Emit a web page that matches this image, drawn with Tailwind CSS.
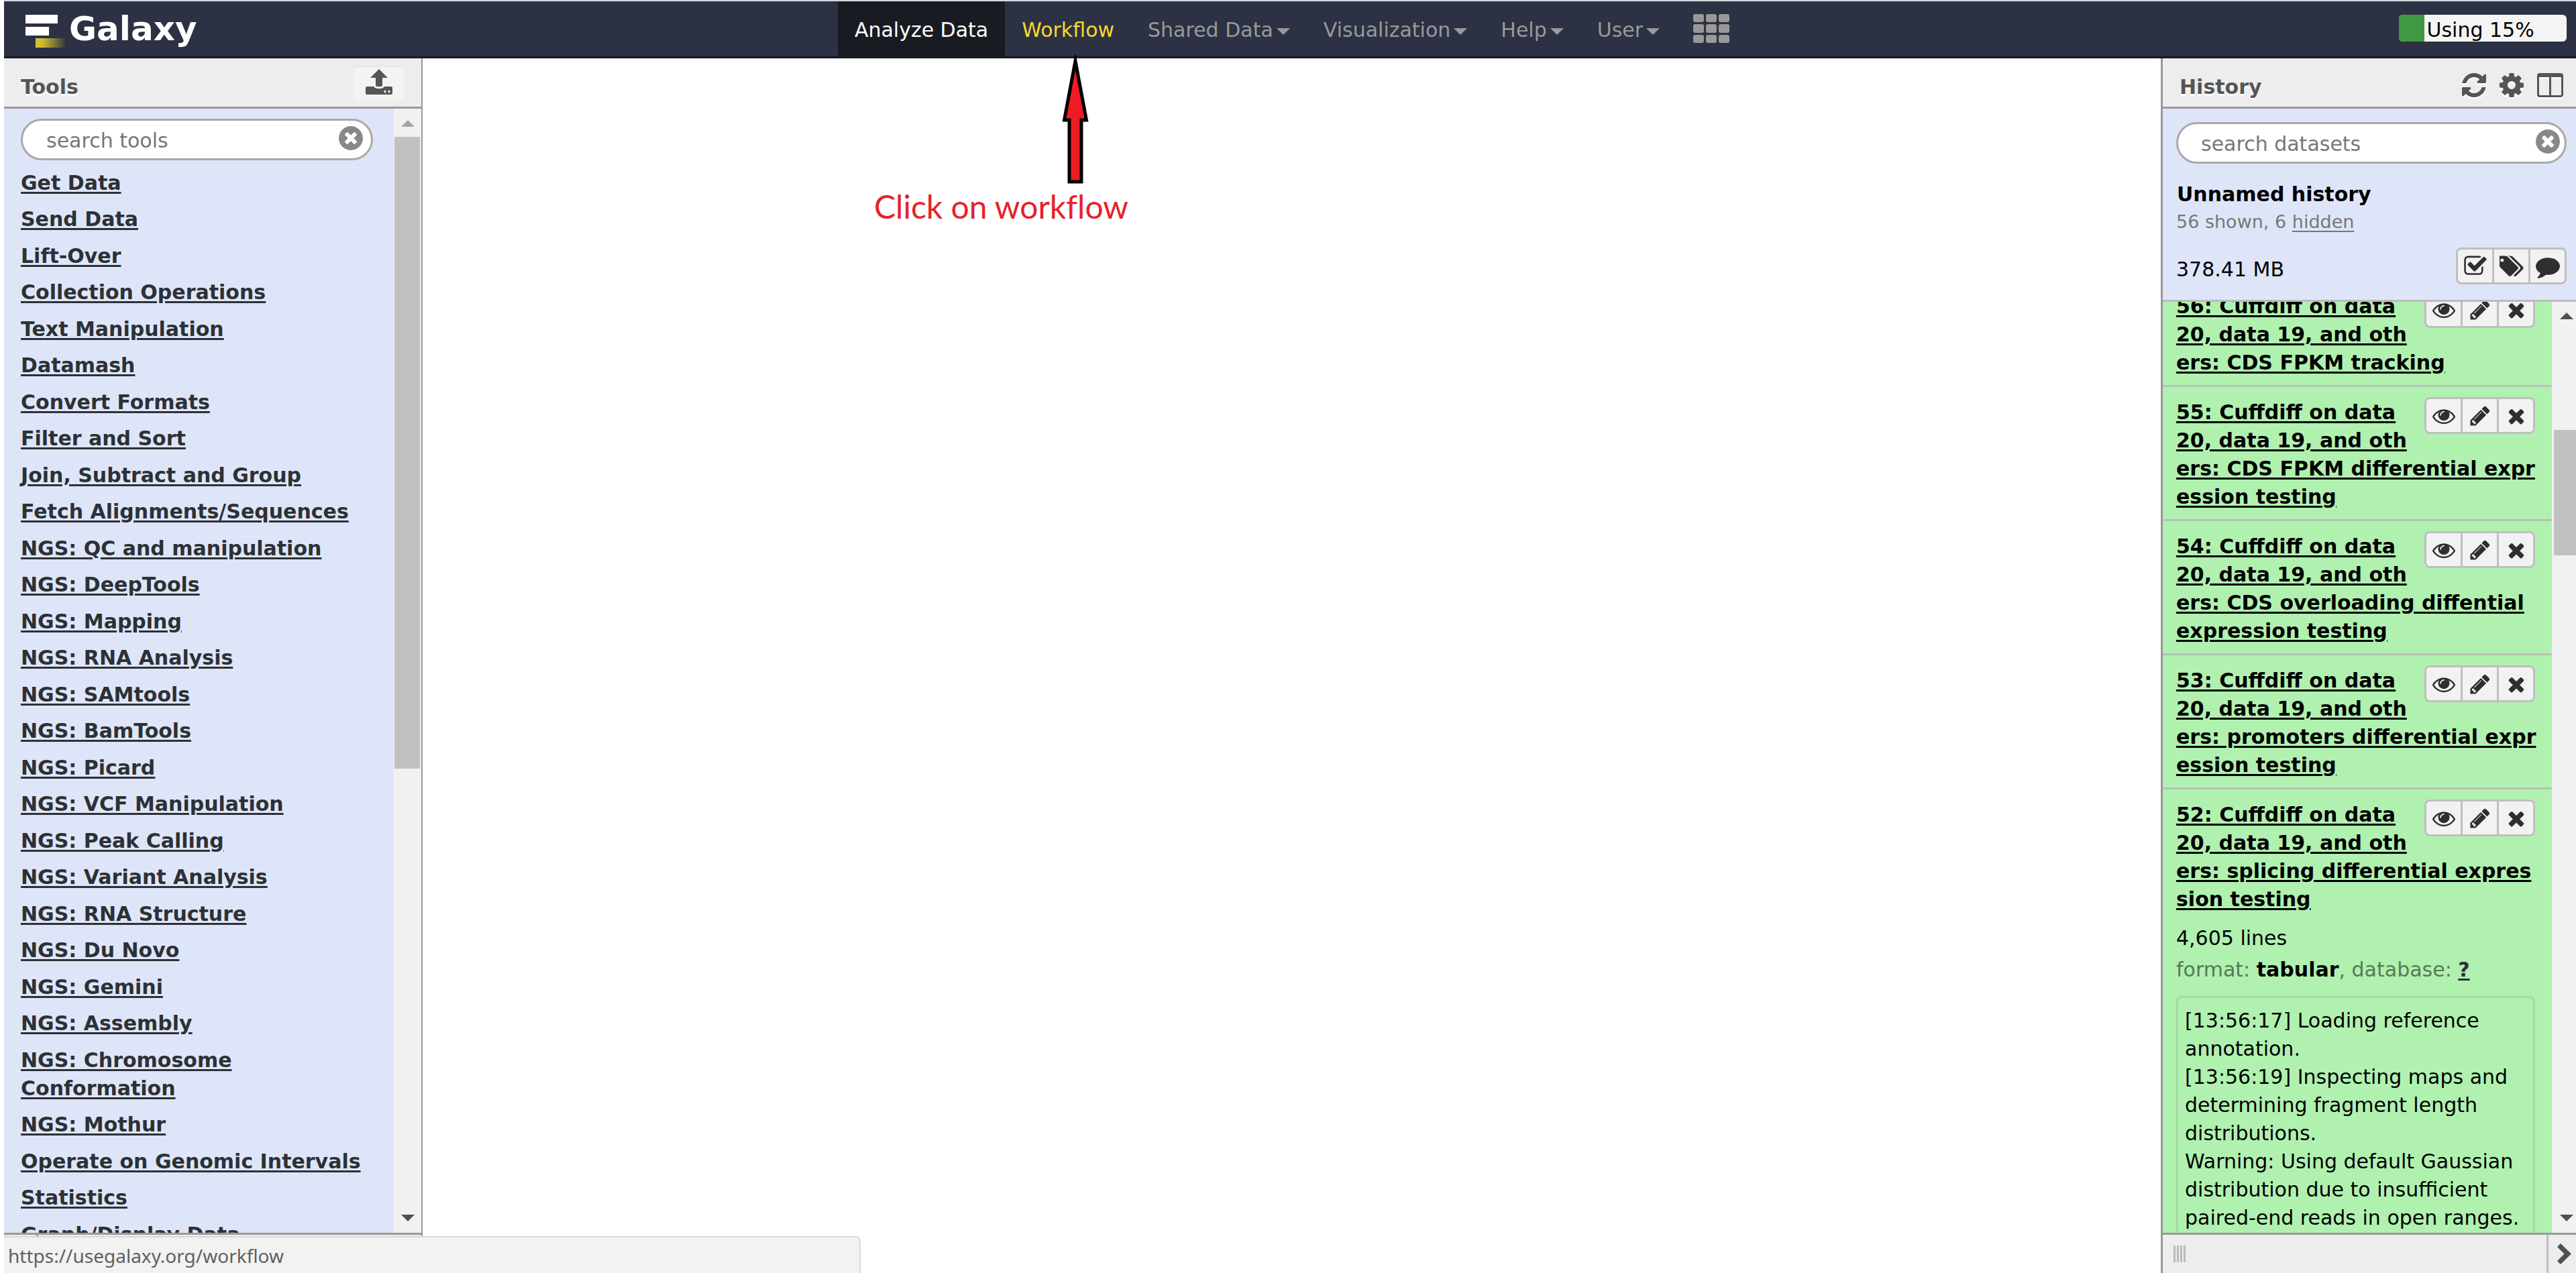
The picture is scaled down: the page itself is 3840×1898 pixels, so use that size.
<!DOCTYPE html>
<html lang="en">
<head>
<meta charset="utf-8">
<title>Galaxy</title>
<script src="https://cdn.jsdelivr.net/npm/@tailwindcss/browser@4"></script>
</head>
<body class="h-screen overflow-hidden bg-white pl-1.5 flex flex-col font-['DejaVu_Sans',Verdana,sans-serif] text-[30px] leading-[42px] text-black">

<svg class="hidden" aria-hidden="true">
  <symbol id="i-clear" viewBox="128 128 1536 1536"><path d="M1277 1122q0-26-19-45l-181-181 181-181q19-19 19-45 0-27-19-46l-90-90q-19-19-46-19-26 0-45 19l-181 181-181-181q-19-19-45-19-27 0-46 19l-90 90q-19 19-19 46 0 26 19 45l181 181-181 181q-19 19-19 45 0 27 19 46l90 90q19 19 46 19 26 0 45-19l181-181 181 181q19 19 45 19 27 0 46-19l90-90q19-19 19-46zm387-226q0 209-103 385.500t-279.500 279.500-385.500 103-385.500-103-279.500-279.500-103-385.500 103-385.500 279.500-279.500 385.500-103 385.500 103 279.500 279.500 103 385.500z"/></symbol>
  <symbol id="i-times" viewBox="0 0 1792 1792"><path d="M1490 1322q0 40-28 68l-136 136q-28 28-68 28t-68-28l-294-294-294 294q-28 28-68 28t-68-28l-136-136q-28-28-28-68t28-68l294-294-294-294q-28-28-28-68t28-68l136-136q28-28 68-28t68 28l294 294 294-294q28-28 68-28t68 28l136 136q28 28 28 68t-28 68l-294 294 294 294q28 28 28 68z"/></symbol>
  <symbol id="i-eye" viewBox="0 0 1792 1792"><path d="M1664 960q-152-236-381-353 61 104 61 225 0 185-131.500 316.500t-316.500 131.500-316.500-131.500-131.500-316.500q0-121 61-225-229 117-381 353 133 205 333.500 326.500t434.500 121.500 434.500-121.500 333.500-326.500zm-720-384q0-20-14-34t-34-14q-125 0-214.500 89.500t-89.500 214.500q0 20 14 34t34 14 34-14 14-34q0-86 61-147t147-61q20 0 34-14t14-34zm848 384q0 34-20 69-140 230-376.500 368.500t-499.500 138.500-499.500-139-376.500-368q-20-35-20-69t20-69q140-229 376.500-368t499.500-139 499.500 139 376.500 368q20 35 20 69z"/></symbol>
  <symbol id="i-pencil" viewBox="0 0 1792 1792"><path d="M491 1536l91-91-235-235-91 91v107h128v128h107zm523-928q0-22-22-22-10 0-17 7l-542 542q-7 7-7 17 0 22 22 22 10 0 17-7l542-542q7-7 7-17zm-54-192l416 416-832 832h-416v-416zm683 96q0 53-37 90l-166 166-416-416 166-165q36-38 90-38 53 0 91 38l235 234q37 39 37 91z"/></symbol>
  <symbol id="i-refresh" viewBox="128 128 1536 1536"><path d="M1639 1056q0 5-1 7-64 268-268 434.500t-478 166.500q-146 0-282.500-55t-243.500-157l-129 129q-19 19-45 19t-45-19-19-45v-448q0-26 19-45t45-19h448q26 0 45 19t19 45-19 45l-137 137q71 66 161 102t187 36q134 0 250-65t186-179q11-17 53-117 8-23 30-23h192q13 0 22.500 9.500t9.500 22.500zm25-800v448q0 26-19 45t-45 19h-448q-26 0-45-19t-19-45 19-45l138-138q-148-137-349-137-134 0-250 65t-186 179q-11 17-53 117-8 23-30 23h-199q-13 0-22.500-9.500t-9.500-22.500v-7q65-268 270-434.500t480-166.500q146 0 284 55.500t245 156.500l130-129q19-19 45-19t45 19 19 45z"/></symbol>
  <symbol id="i-cog" viewBox="128 128 1536 1536"><path d="M1152 896q0-106-75-181t-181-75-181 75-75 181 75 181 181 75 181-75 75-181zm512-109v222q0 12-8 23t-20 13l-185 28q-19 54-39 91 35 50 107 138 10 12 10 25t-9 23q-27 37-99 108t-94 71q-12 0-26-9l-138-108q-44 23-91 38-16 136-29 186-7 28-36 28h-222q-14 0-24.500-8.500t-11.500-21.500l-28-184q-49-16-90-37l-141 107q-10 9-25 9-14 0-25-11-126-114-165-168-7-10-7-23 0-12 8-23 15-21 51-66.500t54-70.500q-27-50-41-99l-183-27q-13-2-21-12.500t-8-23.500v-222q0-12 8-23t19-13l186-28q14-46 39-92-40-57-107-138-10-12-10-24 0-10 9-23 26-36 98.500-107.500t94.500-71.500q13 0 26 10l138 107q44-23 91-38 16-136 29-186 7-28 36-28h222q14 0 24.500 8.500t11.500 21.500l28 184q49 16 90 37l142-107q9-9 24-9 13 0 25 10 129 119 165 170 7 8 7 22 0 12-8 23-15 21-51 66.500t-54 70.500q26 50 41 98l183 28q13 2 21 12.500t8 23.500z"/></symbol>
  <symbol id="i-columns" viewBox="0 0 39 36"><path fill-rule="evenodd" d="M4 0H35Q39 0 39 4V32Q39 36 35 36H4Q0 36 0 32V4Q0 0 4 0ZM3 6V32Q3 33 4 33H18V6ZM21 6V33H35Q36 33 36 32V6Z"/></symbol>
  <symbol id="i-check" viewBox="0 0 1792 1792"><path d="M1472 930v318q0 119-84.500 203.500t-203.500 84.500h-832q-119 0-203.500-84.500t-84.500-203.500v-832q0-119 84.500-203.500t203.500-84.500h832q63 0 117 25 15 7 18 23 3 17-9 29l-49 49q-10 10-23 10-3 0-9-2-23-6-45-6h-832q-66 0-113 47t-47 113v832q0 66 47 113t113 47h832q66 0 113-47t47-113v-254q0-13 9-22l64-64q10-10 23-10 6 0 12 3 20 8 20 29zm231-489l-814 814q-24 24-57 24t-57-24l-430-430q-24-24-24-57t24-57l110-110q24-24 57-24t57 24l263 263 647-647q24-24 57-24t57 24l110 110q24 24 24 57t-24 57z"/></symbol>
  <symbol id="i-tags" viewBox="64 0 1792 1792"><path d="M384 448q0-53-37.500-90.500t-90.500-37.500-90.500 37.500-37.500 90.500 37.500 90.500 90.500 37.500 90.500-37.500 37.500-90.500zm1067 576q0 53-37 90l-491 492q-39 37-91 37-53 0-90-37l-715-716q-38-37-64.500-101t-26.500-117v-416q0-52 38-90t90-38h416q53 0 117 26.500t102 64.500l715 714q37 39 37 91zm384 0q0 53-37 90l-491 492q-39 37-91 37-36 0-59-14t-53-45l470-470q37-37 37-90 0-52-37-91l-715-714q-38-38-102-64.500t-117-26.500h224q53 0 117 26.500t102 64.500l715 714q37 39 37 91z"/></symbol>
  <symbol id="i-comment" viewBox="0 0 1792 1792"><path d="M1792 896q0 174-120 321.500t-326 233-450 85.500q-70 0-145-8-198 175-460 242-49 14-114 22-17 2-30.500-9t-17.500-29v-1q-3-4-.5-12t2-10 4.500-9.500l6-9 7-8.500 8-9q7-8 31-34.500t34.500-38 31-39.500 32.500-51 27-59 26-76q-157-89-247.500-220t-90.500-281q0-130 71-248.500t191-204.500 286-136.500 348-50.500q244 0 450 85.500t326 233 120 321.500z"/></symbol>
  <symbol id="i-caret" viewBox="0 0 20 10"><path d="M0 0H20L10 10Z"/></symbol>
  <symbol id="i-caret-up" viewBox="0 0 20 10"><path d="M0 10H20L10 0Z"/></symbol>
</svg>

<header class="flex shrink-0 border-t-2 border-b-[3px] border-t-[#d3dadd] border-b-[#191b23] bg-[#2c3143]">
  <a href="#" class="flex flex-1 gap-[3px] pl-5 pt-3 text-[50px] leading-[58px] font-bold text-white">
    <svg class="ml-3 mt-2 h-[50px] w-[62px]" viewBox="0 0 62 50">
      <defs><linearGradient id="fade"><stop offset="0" stop-color="#d9c42c"/><stop offset=".25" stop-color="#cbb830"/><stop offset="1" stop-color="#2c3143"/></linearGradient></defs>
      <path fill="#fff" d="M0 0h48v13H0zM0 18h35v13H0z"/><path fill="url(#fade)" d="M15 35h46v14H15z"/>
    </svg>
    Galaxy
  </a>
  <nav class="flex text-[#999]">
    <a href="#" class="bg-[#191b23] px-[25px] pt-[22px] pb-[18px] text-white">Analyze Data</a>
    <a href="#" class="px-[25px] pt-[22px] pb-[18px] text-[#f5d72e]">Workflow</a>
    <a href="#" class="flex gap-[5px] px-[25px] pt-[22px] pb-[18px]">Shared Data<svg class="mt-[18px] h-2.5 w-5 fill-current"><use href="#i-caret"/></svg></a>
    <a href="#" class="flex gap-[5px] px-[25px] pt-[22px] pb-[18px]">Visualization<svg class="mt-[18px] h-2.5 w-5 fill-current"><use href="#i-caret"/></svg></a>
    <a href="#" class="flex gap-[5px] px-[25px] pt-[22px] pb-[18px]">Help<svg class="mt-[18px] h-2.5 w-5 fill-current"><use href="#i-caret"/></svg></a>
    <a href="#" class="flex gap-[5px] px-[25px] pt-[22px] pb-[18px]">User<svg class="mt-[18px] h-2.5 w-5 fill-current"><use href="#i-caret"/></svg></a>
    <a href="#" aria-label="Apps" class="px-[25px] pt-[19px]">
      <svg class="h-[43px] w-[54px] fill-current" viewBox="0 0 54 43"><rect width="16" height="12" rx="3"/><rect x="19" width="16" height="12" rx="3"/><rect x="38" width="16" height="12" rx="3"/><rect y="15" width="16" height="13" rx="3"/><rect x="19" y="15" width="16" height="13" rx="3"/><rect x="38" y="15" width="16" height="13" rx="3"/><rect y="31" width="16" height="12" rx="3"/><rect x="19" y="31" width="16" height="12" rx="3"/><rect x="38" y="31" width="16" height="12" rx="3"/></svg>
    </a>
  </nav>
  <div class="flex flex-1 justify-end pt-5 pr-3.5">
    <div class="flex h-10 w-[250px] overflow-hidden rounded-md bg-[#f4f4f4] text-black">
      <div class="bg-[#409843]" style="width:15%"></div>
      <span class="pl-1 pt-0.5">Using 15%</span>
    </div>
  </div>
</header>

<div class="flex min-h-0 flex-1">

  <aside class="flex w-[624px] shrink-0 flex-col border-r-2 border-[#999] bg-[#dfe5f9]">
    <div class="flex h-[75px] shrink-0 justify-between border-b-[3px] border-[#999] bg-[#ededed] pl-[25px] pr-6 text-[#555]">
      <h2 class="pt-[22px] font-bold [text-shadow:0_3px_0_#fff]">Tools</h2>
      <button aria-label="Upload data" class="mt-2.5 flex h-[53px] w-[78px] items-start justify-center rounded-md bg-[#f3f3f3] pt-1.5 shadow-[inset_0_2px_3px_#e2e2e2]">
        <svg class="h-[38px] w-10 fill-current" viewBox="0 0 40 38"><path d="M20 0L33 13H25V24Q25 26 23 26H17Q15 26 15 24V13H7ZM2 26H12Q14 29 17 29H23Q26 29 28 26H38Q40 26 40 28V36Q40 38 38 38H2Q0 38 0 36V28Q0 26 2 26ZM29 31.500a1.500 2 0 1 0 0 4a1.500 2 0 1 0 0-4ZM35 31.500a1.500 2 0 1 0 0 4a1.500 2 0 1 0 0-4Z" fill-rule="evenodd"/></svg>
      </button>
    </div>
    <div class="flex min-h-0 flex-1">
      <div class="min-h-0 flex-1 overflow-hidden pl-[25px] pt-[15px]">
        <form class="flex h-[62px] w-[525px] items-center rounded-full border-[3px] border-[#a9a9a9] bg-white pl-[35px] pr-3">
          <input aria-label="search tools" placeholder="search tools" class="min-w-0 flex-1 bg-transparent pt-[3px] outline-none placeholder:text-[#777]">
          <button type="button" aria-label="Clear search" class="pb-1"><svg class="size-9 fill-[#888]"><use href="#i-clear"/></svg></button>
        </form>
        <ul class="pt-[13px] font-bold text-[#2c3135] underline decoration-[3px] underline-offset-[3px] [&>li:nth-child(odd)]:mb-3 [&>li:nth-child(even)]:mb-[13px]">
          <li><a href="#">Get Data</a></li>
          <li><a href="#">Send Data</a></li>
          <li><a href="#">Lift-Over</a></li>
          <li><a href="#">Collection Operations</a></li>
          <li><a href="#">Text Manipulation</a></li>
          <li><a href="#">Datamash</a></li>
          <li><a href="#">Convert Formats</a></li>
          <li><a href="#">Filter and Sort</a></li>
          <li><a href="#">Join, Subtract and Group</a></li>
          <li><a href="#">Fetch Alignments/Sequences</a></li>
          <li><a href="#">NGS: QC and manipulation</a></li>
          <li><a href="#">NGS: DeepTools</a></li>
          <li><a href="#">NGS: Mapping</a></li>
          <li><a href="#">NGS: RNA Analysis</a></li>
          <li><a href="#">NGS: SAMtools</a></li>
          <li><a href="#">NGS: BamTools</a></li>
          <li><a href="#">NGS: Picard</a></li>
          <li><a href="#">NGS: VCF Manipulation</a></li>
          <li><a href="#">NGS: Peak Calling</a></li>
          <li><a href="#">NGS: Variant Analysis</a></li>
          <li><a href="#">NGS: RNA Structure</a></li>
          <li><a href="#">NGS: Du Novo</a></li>
          <li><a href="#">NGS: Gemini</a></li>
          <li><a href="#">NGS: Assembly</a></li>
          <li><a href="#">NGS: Chromosome<br>Conformation</a></li>
          <li><a href="#">NGS: Mothur</a></li>
          <li><a href="#">Operate on Genomic Intervals</a></li>
          <li><a href="#">Statistics</a></li>
          <li><a href="#">Graph/Display Data</a></li>
        </ul>
      </div>
      <div class="flex w-[41px] flex-col items-center bg-[#f1f1f1]">
        <div class="h-[42px] pt-[17px]"><svg class="h-2.5 w-5 fill-[#a3a3a3]"><use href="#i-caret-up"/></svg></div>
        <div class="w-full flex-1 pl-px pr-0.5"><div class="bg-[#c1c1c1]" style="height:59.2%"></div></div>
        <div class="h-[42px] pt-[15px]"><svg class="h-2.5 w-5 fill-[#505050]"><use href="#i-caret"/></svg></div>
      </div>
    </div>
    <div class="h-[60px] shrink-0 border-t-[3px] border-[#999] bg-[#ededed] pl-12"><div class="h-full w-[3px] bg-[#999]"></div></div>
  </aside>

  <main class="relative flex-1">
    <svg class="absolute -top-1.5 left-[951px] h-[194px] w-[44px]" viewBox="0 0 44 194" aria-hidden="true"><path d="M22 10L38.500 98H31V190H13V98H5.500Z" fill="#ed1c24" stroke="#000" stroke-width="5" stroke-miterlimit="14"/></svg>
    <p class="absolute left-[673px] top-[189px] whitespace-nowrap font-[Lato,sans-serif] text-[48px] leading-[64px] text-[#e5222a] [font-variant-ligatures:none]">Click on workflow</p>
  </main>

  <aside class="flex w-[619px] shrink-0 flex-col border-l-[3px] border-[#999] bg-[#dfe5f9]">
    <div class="flex h-[75px] shrink-0 border-b-[3px] border-[#999] bg-[#ededed] pl-[25px] pr-[19px] text-[#555]">
      <h2 class="flex-1 pt-[22px] font-bold [text-shadow:0_3px_0_#fff]">History</h2>
      <div class="flex items-start gap-5 pt-[22px]">
        <button aria-label="Refresh history"><svg class="size-9 fill-current drop-shadow-[0_3px_0_#fff]"><use href="#i-refresh"/></svg></button>
        <button aria-label="History options"><svg class="size-9 fill-current drop-shadow-[0_3px_0_#fff]"><use href="#i-cog"/></svg></button>
        <button aria-label="View all histories"><svg class="h-9 w-[39px] fill-current drop-shadow-[0_3px_0_#fff]"><use href="#i-columns"/></svg></button>
      </div>
    </div>

    <div class="h-72 shrink-0 border-b-[3px] border-[#bbb] pl-5 pr-3.5 pt-5">
      <form class="flex h-[62px] items-center rounded-full border-[3px] border-[#a9a9a9] bg-white pl-[34px] pr-[7px]">
        <input aria-label="search datasets" placeholder="search datasets" class="min-w-0 flex-1 bg-transparent pt-[3px] outline-none placeholder:text-[#777]">
        <button type="button" aria-label="Clear search" class="pb-1"><svg class="size-9 fill-[#888]"><use href="#i-clear"/></svg></button>
      </form>
      <h3 class="pt-[25px] pl-px font-bold">Unnamed history</h3>
      <p class="text-[27px] leading-10 text-[#777]">56 shown, 6 <a href="#" class="underline decoration-2 underline-offset-4">hidden</a></p>
      <div class="flex items-start justify-between pt-[18px]">
        <span class="pt-3">378.41 MB</span>
        <div class="flex h-[55px] w-[165px] divide-x-[3px] divide-[#bfbfbf] rounded-lg border-[3px] border-[#bfbfbf] bg-[#f2f2f2] text-[#2f2f2f]">
          <button aria-label="Select datasets" class="flex flex-1 items-center justify-center"><svg class="size-9 fill-current"><use href="#i-check"/></svg></button>
          <button aria-label="Edit tags" class="flex flex-1 items-center justify-center"><svg class="size-9 fill-current"><use href="#i-tags"/></svg></button>
          <button aria-label="Annotate" class="flex flex-1 items-center justify-center"><svg class="size-9 fill-current"><use href="#i-comment"/></svg></button>
        </div>
      </div>
    </div>

    <div class="flex min-h-0 flex-1">
      <div id="datasets" class="min-h-0 flex-1 overflow-hidden whitespace-nowrap bg-[#b0f1b0] [&>section:first-child]:-mt-[31px]">
        <section class="flow-root border-b-[3px] border-[#b6c3b6] pl-5 pr-[25px] pt-[15px] pb-3"><a href="#" class="block pt-0.5 font-bold underline decoration-[3px] underline-offset-[3px]">56: Cuffdiff on data<br>20, data 19, and oth<br>ers: CDS FPKM tracking</a></section>
        <section class="flow-root border-b-[3px] border-[#b6c3b6] pl-5 pr-[25px] pt-[15px] pb-3"><a href="#" class="block pt-0.5 font-bold underline decoration-[3px] underline-offset-[3px]">55: Cuffdiff on data<br>20, data 19, and oth<br>ers: CDS FPKM differential expr<br>ession testing</a></section>
        <section class="flow-root border-b-[3px] border-[#b6c3b6] pl-5 pr-[25px] pt-[15px] pb-3"><a href="#" class="block pt-0.5 font-bold underline decoration-[3px] underline-offset-[3px]">54: Cuffdiff on data<br>20, data 19, and oth<br>ers: CDS overloading diffential<br>expression testing</a></section>
        <section class="flow-root border-b-[3px] border-[#b6c3b6] pl-5 pr-[25px] pt-[15px] pb-3"><a href="#" class="block pt-0.5 font-bold underline decoration-[3px] underline-offset-[3px]">53: Cuffdiff on data<br>20, data 19, and oth<br>ers: promoters differential expr<br>ession testing</a></section>
        <section class="flow-root pl-5 pr-[25px] pt-[15px]"><a href="#" class="block pt-0.5 font-bold underline decoration-[3px] underline-offset-[3px]">52: Cuffdiff on data<br>20, data 19, and oth<br>ers: splicing differential expres<br>sion testing</a>
          <p class="pt-4">4,605 lines</p>
          <p class="pt-[5px] text-[#557a55]">format: <b class="text-black">tabular</b>, database: <a href="#" class="font-bold text-[#2c3135] underline decoration-[3px] underline-offset-[3px]">?</a></p>
          <div class="mt-[18px] rounded-lg border-[3px] border-[#a3dba3] px-2.5 pt-[13px] pb-40">[13:56:17] Loading reference<br>annotation.<br>[13:56:19] Inspecting maps and<br>determining fragment length<br>distributions.<br>Warning: Using default Gaussian<br>distribution due to insufficient<br>paired-end reads in open ranges.</div>
        </section>
      </div>
      <div class="flex w-9 flex-col bg-[#f1f1f1] pl-[3px]">
        <div class="h-[42px] pl-[9px] pt-4"><svg class="h-2.5 w-5 fill-[#505050]"><use href="#i-caret-up"/></svg></div>
        <div class="flex-1"><div style="height:11.4%"></div><div class="bg-[#c1c1c1]" style="height:14.4%"></div></div>
        <div class="h-[42px] pl-[9px] pt-[15px]"><svg class="h-2.5 w-5 fill-[#505050]"><use href="#i-caret"/></svg></div>
      </div>
    </div>

    <div class="flex h-[60px] shrink-0 items-center border-t-[3px] border-[#999] bg-[#ededed] pl-4">
      <div class="flex flex-1"><svg class="h-[25px] w-[19px] fill-[#bbb]" viewBox="0 0 19 25"><path d="M0 0h3v25H0zM5 0h3v25H5zM10 0h3v25H10zM15 0h3v25H15z"/></svg></div>
      <button aria-label="Collapse history panel" class="flex h-full w-[44px] items-center border-l-[3px] border-[#bfbfbf] pl-[13px]"><svg class="h-[31px] w-[21px] fill-[#505050]" viewBox="0 0 21 31"><path d="M5 0L21 15.500L5 31L0 26L10.500 15.500L0 5Z"/></svg></button>
    </div>
  </aside>
</div>

<div class="fixed bottom-0 left-1.5 h-[55px] w-[1277px] rounded-tr-lg border-t-2 border-r-2 border-[#d9d9d9] bg-[#f2f2f2] pl-1.5 pt-1.5 font-['Noto_Sans',sans-serif] text-[28px] leading-[42px] text-[#606060]">https://usegalaxy.org/workflow</div>

<template id="dataset-actions">
  <div class="float-right flex h-[55px] w-[165px] divide-x-[3px] divide-[#bfbfbf] rounded-lg border-[3px] border-[#bfbfbf] bg-[#f2f2f2] text-[#2f2f2f]">
    <button aria-label="View data" class="flex flex-1 items-center justify-center"><svg class="size-[34px] fill-current"><use href="#i-eye"/></svg></button>
    <button aria-label="Edit attributes" class="flex flex-1 items-center justify-center"><svg class="size-[34px] fill-current"><use href="#i-pencil"/></svg></button>
    <button aria-label="Delete" class="flex flex-1 items-center justify-center"><svg class="size-[34px] fill-current"><use href="#i-times"/></svg></button>
  </div>
</template>
<script>
  const actions = document.getElementById('dataset-actions');
  document.querySelectorAll('#datasets > section').forEach(s => s.prepend(actions.content.cloneNode(true)));
</script>
</body>
</html>
